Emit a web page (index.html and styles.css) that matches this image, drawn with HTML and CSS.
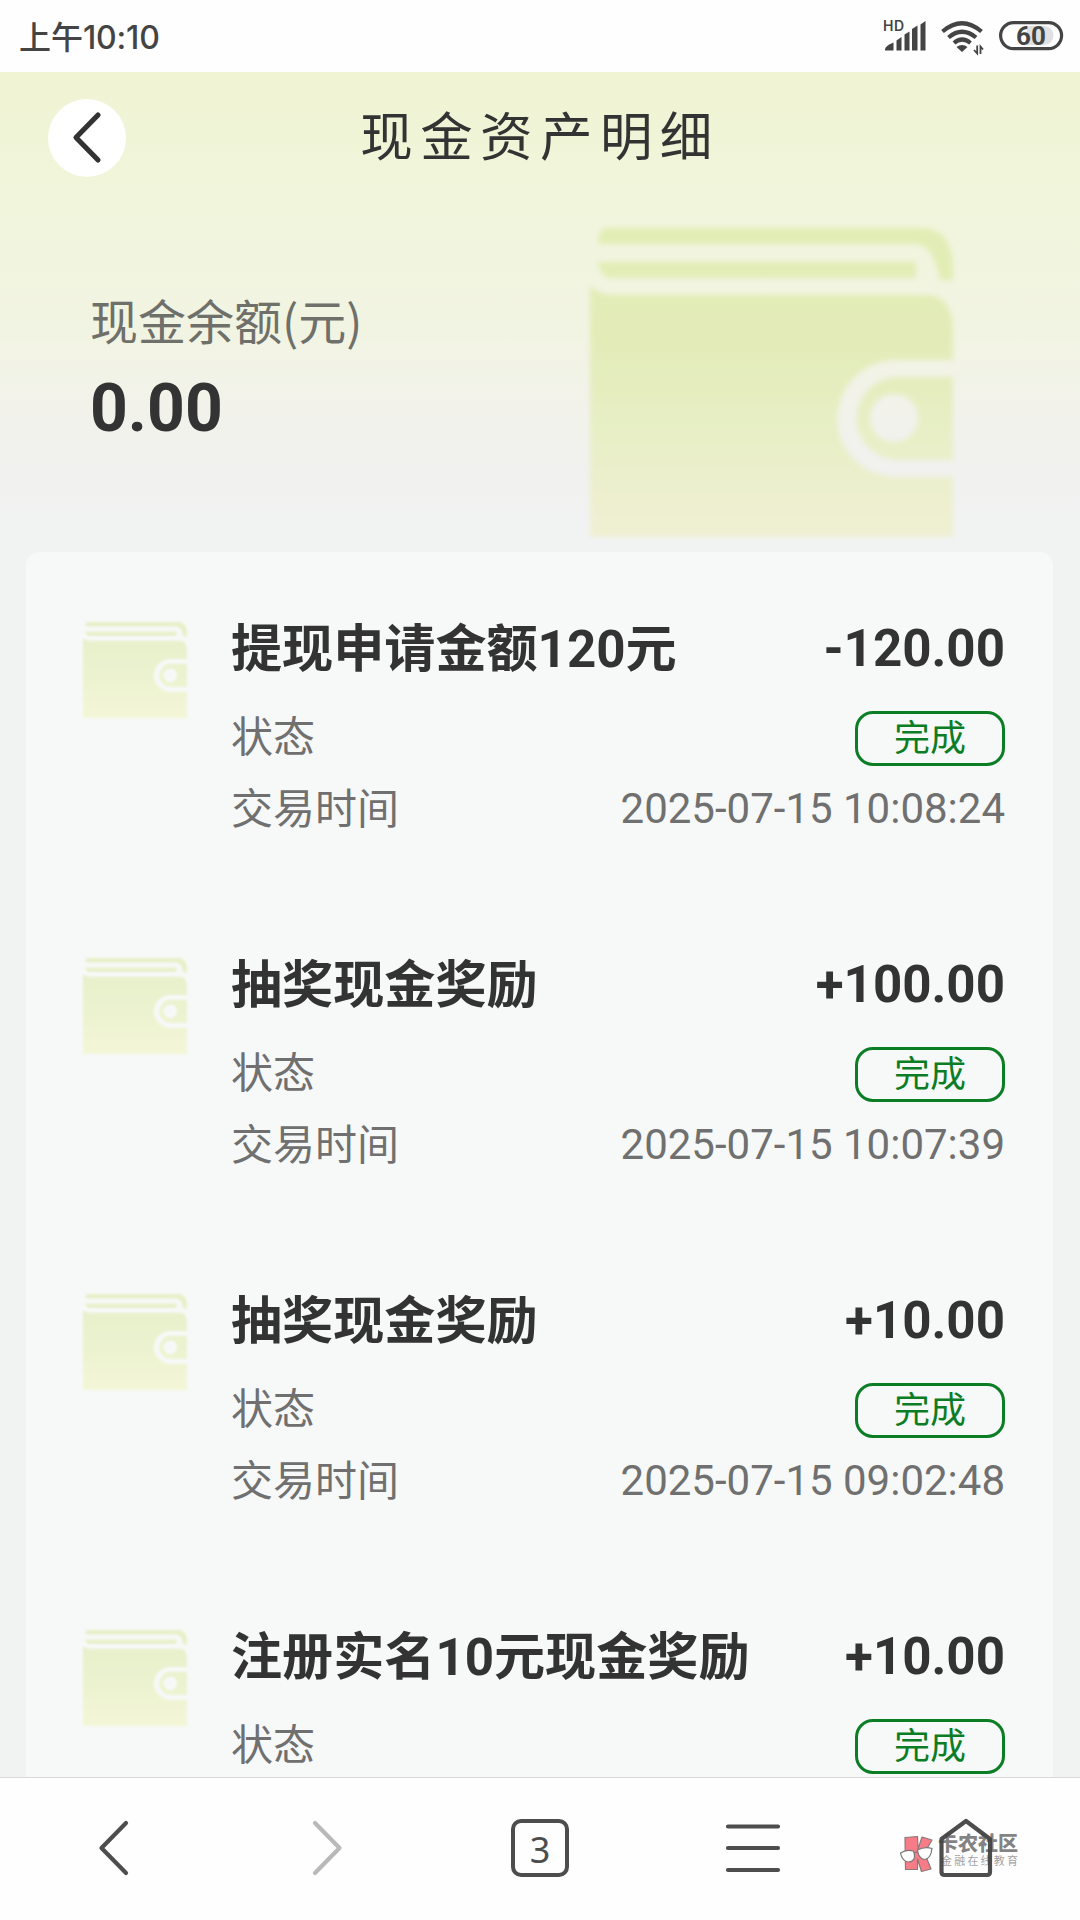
FILE: index.html
```html
<!DOCTYPE html>
<html lang="zh-CN">
<head>
<meta charset="utf-8">
<title>现金资产明细</title>
<link rel="stylesheet" href="styles.css">
</head>
<body>
<svg class="defs" width="0" height="0" aria-hidden="true">
  <defs>
    <linearGradient id="walletLarge" x1="0" y1="0" x2="0" y2="1">
      <stop offset="0" stop-color="#e2edb5"/>
      <stop offset=".35" stop-color="#e3ecb9"/>
      <stop offset=".62" stop-color="#e8efc7"/>
      <stop offset=".86" stop-color="#efefd2"/>
      <stop offset="1" stop-color="#f0efd4"/>
    </linearGradient>
    <linearGradient id="walletSmall" x1="0" y1="0" x2="0" y2="1">
      <stop offset="0" stop-color="#e7efc8"/>
      <stop offset=".5" stop-color="#ebf2cf"/>
      <stop offset="1" stop-color="#f4f6d8"/>
    </linearGradient>
    <path id="wallet" fill-rule="evenodd" d="M14 0H330C352 0 363 14 363 40V52H350C344 28 340 16 322 16H8Q8 5 14 0Z M8 34H326V50H18Q9 44 8 34Z M0 58Q10 67 24 67H338C354 67 363 82 363 100V132H306A58.500 58.500 0 0 0 306 249H363V342H0Z M363 149V232H308A41.500 41.500 0 0 1 308 149Z M304 166A24 24 0 1 0 304 214A24 24 0 1 0 304 166Z"/>
  </defs>
</svg>
<div class="screen">
  <div class="status">
    <span class="clock"><span class="ampm">上午</span><span class="digits">10:10</span></span>
    <svg class="status-icons" width="184" height="40" viewBox="0 0 184 40">
      <text class="hd" x="0" y="15">HD</text>
      <g fill="#444" transform="translate(-1 .5)">
        <path d="M3 33Q3 29.500 11.500 26V34H3Z"/>
        <path d="M14.500 34V24L19.500 20.500V34Z"/>
        <path d="M22.500 34V18L27.500 15V34Z"/>
        <path d="M30 34V12.500L35.500 9V34Z"/>
        <path d="M38.500 34V8L43.500 4.500V34Z"/>
        <path d="M74.500 30.500Q80 26.500 85.500 30.500L80 35.500Z"/>
      </g>
      <path d="M94.200 29.500V37.500L91 34M97.500 38V30.500L100 33.500" fill="none" stroke="#444" stroke-width="1.800"/>
      <g fill="none" stroke="#444" stroke-width="4.200" transform="translate(-1 1)">
        <path d="M60.500 14.500Q80 -2 99.500 14.500"/>
        <path d="M66.500 20.500Q80 9 94 20.500"/>
        <path d="M72 26Q80 19 88.500 26"/>
      </g>
      <path d="M144 10H161A9.500 9.500 0 0 1 161 29H144Z" fill="#e0e0e0"/>
      <rect x="117.600" y="6.600" width="61" height="26" rx="13" fill="none" stroke="#444" stroke-width="3.200"/>
      <text class="battery" x="148" y="28.800">60</text>
    </svg>
  </div>
  <main class="page">
    <header class="hero">
      <div class="titlebar">
        <span class="back">
          <svg width="78" height="78" viewBox="0 0 78 78"><path d="M50 16L28 38.500L50 61" fill="none" stroke="#333" stroke-width="5.200" stroke-linecap="round" stroke-linejoin="round"/></svg>
        </span>
        <h1>现金资产明细</h1>
      </div>
      <div class="balance">
        <div class="figures">
          <div class="caption">现金余额(元)</div>
          <div class="total">0.00</div>
        </div>
        <svg class="wallet-large" width="375" height="317" viewBox="-6 -8 375 317"><use href="#wallet" fill="url(#walletLarge)"/></svg>
      </div>
    </header>
    <section class="list">
      <article class="item">
        <svg class="wallet-small" width="104" height="96" viewBox="0 0 363 342" preserveAspectRatio="none"><use href="#wallet" fill="url(#walletSmall)"/></svg>
        <div class="detail">
          <div class="line head"><span>提现申请金额120元</span><span class="amount">-120.00</span></div>
          <div class="line state"><span class="label">状态</span><span class="badge">完成</span></div>
          <div class="line time"><span class="label">交易时间</span><span>2025-07-15 10:08:24</span></div>
        </div>
      </article>
      <article class="item">
        <svg class="wallet-small" width="104" height="96" viewBox="0 0 363 342" preserveAspectRatio="none"><use href="#wallet" fill="url(#walletSmall)"/></svg>
        <div class="detail">
          <div class="line head"><span>抽奖现金奖励</span><span class="amount">+100.00</span></div>
          <div class="line state"><span class="label">状态</span><span class="badge">完成</span></div>
          <div class="line time"><span class="label">交易时间</span><span>2025-07-15 10:07:39</span></div>
        </div>
      </article>
      <article class="item">
        <svg class="wallet-small" width="104" height="96" viewBox="0 0 363 342" preserveAspectRatio="none"><use href="#wallet" fill="url(#walletSmall)"/></svg>
        <div class="detail">
          <div class="line head"><span>抽奖现金奖励</span><span class="amount">+10.00</span></div>
          <div class="line state"><span class="label">状态</span><span class="badge">完成</span></div>
          <div class="line time"><span class="label">交易时间</span><span>2025-07-15 09:02:48</span></div>
        </div>
      </article>
      <article class="item">
        <svg class="wallet-small" width="104" height="96" viewBox="0 0 363 342" preserveAspectRatio="none"><use href="#wallet" fill="url(#walletSmall)"/></svg>
        <div class="detail">
          <div class="line head"><span>注册实名10元现金奖励</span><span class="amount">+10.00</span></div>
          <div class="line state"><span class="label">状态</span><span class="badge">完成</span></div>
        </div>
      </article>
    </section>
  </main>
  <nav class="toolbar">
    <svg width="60" height="60" viewBox="0 0 60 60"><path d="M42 5L17.500 30L42 55" class="stroke"/></svg>
    <svg width="60" height="60" viewBox="0 0 60 60"><path d="M18 5L42.500 30L18 55" class="stroke faded"/></svg>
    <span class="tabs">3</span>
    <svg width="60" height="60" viewBox="0 0 60 60"><path d="M5 8.500H55M5 30H55M5 52H55" class="stroke"/></svg>
    <svg width="60" height="60" viewBox="0 0 60 60"><path d="M5.500 21L30 3L54 21V54Q54 57 51 57H8.500Q5.500 57 5.500 54Z" class="stroke"/></svg>
    <div class="mark">
      <svg width="36" height="38" viewBox="0 0 36 38">
        <g fill="#f77c87" stroke="#8a7a78" stroke-width="1.200" stroke-linejoin="round">
          <path d="M6 2.500L18.500 1.500L19 14L23 2L33 5L25.500 18L32 34L22.500 36.500L18.500 24V34.500H6.500Z"/>
        </g>
        <path d="M1.500 18Q7 14 14.500 16Q18 26 9.500 27Q3 26 1.500 18ZM18.500 15Q26 11 33 13.500Q32 23 26 24.500Q19.500 24 18.500 15Z" fill="#fff" stroke="#777" stroke-width="1.200"/>
        <path d="M15 18L19 16.500" stroke="#777"/>
      </svg>
      <div class="mark-text"><b>卡农社区</b><small>金融在线教育</small></div>
    </div>
  </nav>
</div>
</body>
</html>
```
FILE: styles.css
```css
* { box-sizing: border-box; }
body { margin: 0; background: #fff; font-family: Roboto, "Noto Sans CJK SC", sans-serif; color: #333; }
svg { display: block; flex: none; }
.defs { position: absolute; }
.screen { width: 1080px; height: 1920px; display: flex; flex-direction: column; overflow: hidden; }

.status { height: 72px; flex: none; display: flex; align-items: center; justify-content: space-between; padding: 0 13px 0 19px; background: #fefefe; }
.clock { display: flex; align-items: center; font: 500 32px/40px Inter, sans-serif; color: #444; letter-spacing: -.2px; }
.ampm { font-family: "Noto Sans CJK SC", sans-serif; letter-spacing: 0; padding-bottom: 2px; }
.digits { padding-top: 3px; }
.hd { font: 600 14px Inter, sans-serif; fill: #444; letter-spacing: .5px; }
.battery { font: 700 26px Roboto, sans-serif; fill: #444; text-anchor: middle; }

.page { flex: 1; min-height: 0; overflow: hidden; background: #f1f3f3; }
.hero { height: 480px; background: linear-gradient(#f0f4d3, #f1f5dd 32%, #f2f4e3 55%, #f2f2ec 72%, #f1f1ef 84%, #f1f3f3 97%); }
.titlebar { height: 148px; display: grid; grid-template-columns: 78px 1fr 78px; align-items: start; padding: 27px 48px 0; }
.back { width: 78px; height: 78px; border-radius: 50%; background: #fff; }
h1 { margin: 0; font-size: 52.500px; line-height: 78px; font-weight: 400; letter-spacing: 7.400px; text-align: center; }
.balance { display: flex; justify-content: space-between; padding: 0 121px 0 90px; }
.figures { padding-top: 63px; }
.caption { font: 400 48px/72px "Noto Sans CJK SC", sans-serif; color: #6f706a; }
.total { font-size: 66px; font-weight: 700; line-height: 80px; margin-top: 14px; }
.wallet-large { filter: blur(2.500px); }

.list { margin: 0 27px 0 26px; height: 1400px; background: #f7f9f8; border-radius: 14px 14px 0 0; }
.item { height: 336px; display: flex; gap: 44px; padding: 55px 48px 0 57px; }
.wallet-small { margin-top: 15px; filter: blur(1px); }
.detail { flex: 1; }
.line { display: flex; align-items: center; justify-content: space-between; white-space: nowrap; }
.head { height: 76px; font-size: 51.100px; font-weight: 700; }
.amount { padding-top: 7px; }
.state, .time { font-size: 42px; color: #707070; }
.state { height: 84px; margin-top: 13px; }
.label { padding-bottom: 9px; }
.time { height: 60px; margin-top: -2px; }
.time .label { padding-bottom: 6px; }
.badge { width: 150px; height: 55px; border: 3px solid #0b7d25; border-radius: 18px; color: #0b7d25; font-size: 36px; line-height: 50px; text-align: center; }

.toolbar { position: relative; height: 143px; flex: none; display: grid; grid-template-columns: repeat(5, 1fr); place-items: center; padding: 0 8px 3px; border-top: 1px solid #d9d9d9; background: #fefefe; }
.stroke { fill: none; stroke: #4d4d4d; stroke-width: 4.200; stroke-linecap: round; stroke-linejoin: round; }
.faded { stroke: #b9b9b9; }
.tabs { width: 58px; height: 58px; border: 4px solid #4d4d4d; border-radius: 10px; font: 400 36px/53px "Noto Sans", sans-serif; text-align: center; color: #4d4d4d; }
.mark { position: absolute; left: 899px; top: 57px; display: flex; gap: 3px; }
.mark-text { font-family: "Noto Sans CJK SC", sans-serif; margin-top: -3px; }
.mark-text b { display: block; font-size: 20px; line-height: 22px; font-weight: 900; color: #444a; }
.mark-text small { display: block; font-size: 11px; line-height: 12px; letter-spacing: 2.200px; padding-left: 3px; color: #4448; }
```
